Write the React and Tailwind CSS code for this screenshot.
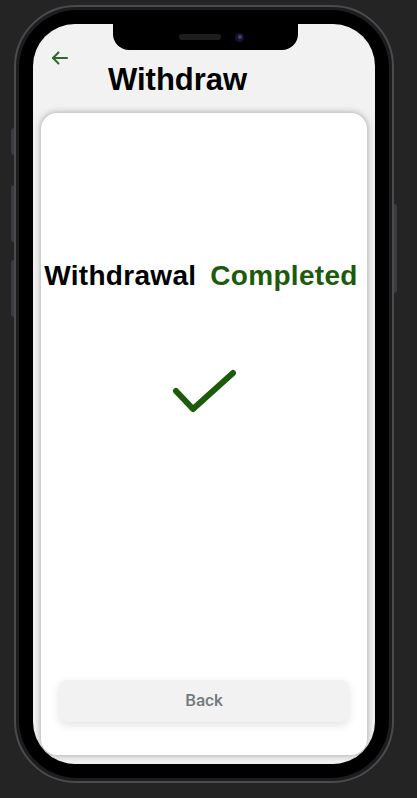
import React from 'react';

const BackArrow = () => (
  <svg width="17" height="14" viewBox="0 0 17 14" fill="none" stroke="#2e6b2a" strokeWidth="2" strokeLinecap="round" strokeLinejoin="round">
    <path d="M16 7H2" />
    <path d="M7.5 1.5 2 7l5.5 5.5" />
  </svg>
);

const Check = () => (
  <svg width="66" height="50" viewBox="0 0 66 50" fill="none" stroke="#1c5a0c" strokeWidth="6" strokeLinecap="round" strokeLinejoin="round">
    <path d="M4 22l17 18L61 4" />
  </svg>
);

const App = () => {
  return (
    <div className="relative w-[417px] h-[798px] bg-[#242424] pl-[14px] pt-[5px] overflow-hidden" style={{ fontFamily: '"Liberation Sans", Arial, sans-serif' }}>
      {/* side buttons */}
      <div className="absolute left-[11px] top-[128px] w-[3px] h-[27px] rounded-l bg-[#3c3c40]" />
      <div className="absolute left-[11px] top-[185px] w-[3px] h-[57px] rounded-l bg-[#3c3c40]" />
      <div className="absolute left-[11px] top-[260px] w-[3px] h-[57px] rounded-l bg-[#3c3c40]" />
      <div className="absolute left-[394px] top-[204px] w-[3px] h-[89px] rounded-r bg-[#3c3c40]" />

      {/* phone frame */}
      <div className="w-[380px] h-[778px] rounded-[62px] border-2 border-[#4a4a4f] bg-[#1d1d1f] p-[3px]">
        <div className="relative w-full h-full rounded-[58px] bg-black p-[14px] pt-[14px]">
          {/* screen */}
          <div className="relative w-full h-full rounded-[42px] bg-[#f2f2f2] overflow-hidden flex flex-col">
            {/* notch */}
            <div className="absolute left-[80px] top-0 w-[185px] h-[26px] bg-black rounded-b-[16px] flex items-center justify-center gap-[14px] pl-[12px]">
              <div className="w-[42px] h-[6px] rounded-full bg-[#1e1e20]" />
              <div className="w-[9px] h-[9px] rounded-full bg-[#14142a] flex items-center justify-center">
                <div className="w-[4px] h-[4px] rounded-full bg-[#3a3f8a]" />
              </div>
            </div>

            {/* header */}
            <div className="h-[89px] shrink-0">
              <div className="pt-[27px] pl-[18px]">
                <BackArrow />
              </div>
              <h1 className="pl-[75px] -mt-[3px] text-[31px] leading-[36px] font-bold text-black">Withdraw</h1>
            </div>

            {/* card */}
            <div className="flex-1 mx-[8px] mb-[9px] bg-white rounded-[16px] shadow-[0_0_7px_rgba(0,0,0,0.35)] flex flex-col">
              <div className="pt-[147px] pr-[6px] flex justify-center gap-[14px] text-[28px] leading-[32px] font-bold tracking-[0.3px]">
                <span className="text-black">Withdrawal</span>
                <span className="text-[#1c5a0c]">Completed</span>
              </div>
              <div className="mt-[77px] flex justify-center pl-[2px]">
                <Check />
              </div>
              <div className="flex-1" />
              <div className="px-[18px] pb-[33px]">
                <button className="w-full h-[42px] rounded-[8px] bg-[#f2f2f2] shadow-[0_3px_8px_rgba(0,0,0,0.12)] text-[17px] font-medium text-[#737a80]" style={{ fontFamily: 'Roboto, sans-serif' }}>
                  Back
                </button>
              </div>
            </div>
          </div>
        </div>
      </div>
    </div>
  );
};

export default App;
